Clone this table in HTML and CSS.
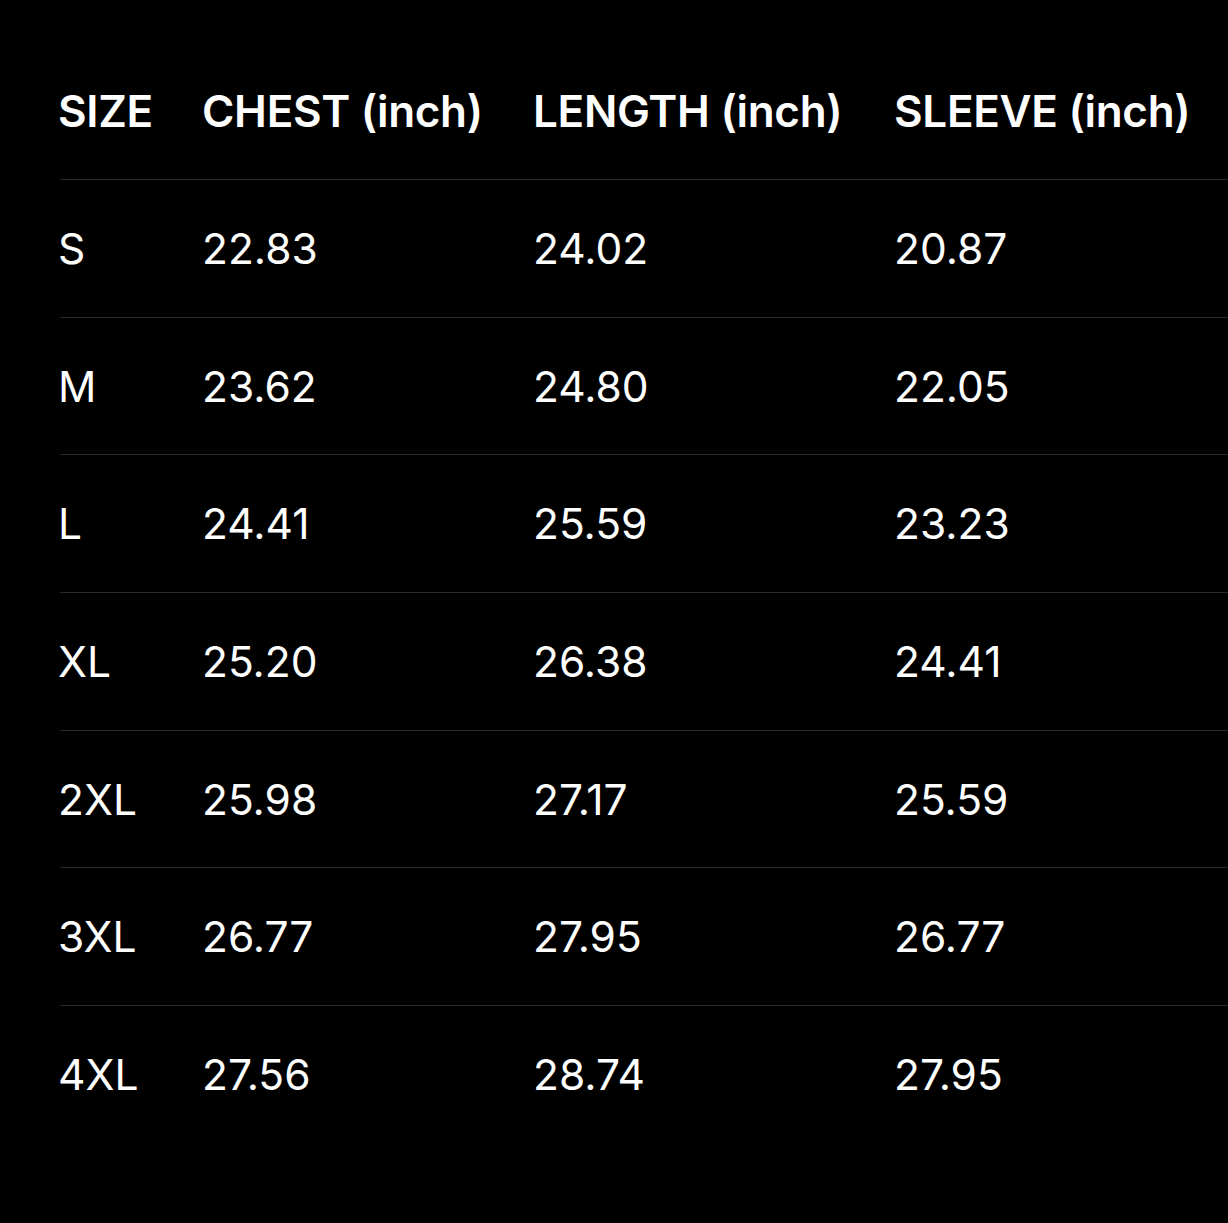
FILE: index.html
```html
<!DOCTYPE html>
<html lang="en">
<head>
<meta charset="utf-8">
<title>Size chart</title>
<link rel="stylesheet" href="styles.css">
</head>
<body>
<table class="size-table">
  <colgroup>
    <col class="col-size">
    <col class="col-chest">
    <col class="col-length">
    <col class="col-sleeve">
  </colgroup>
  <thead>
    <tr class="row head-row">
      <th>SIZE</th>
      <th>CHEST (inch)</th>
      <th>LENGTH (inch)</th>
      <th>SLEEVE (inch)</th>
    </tr>
  </thead>
  <tbody>
    <tr class="row"><td>S</td><td>22.83</td><td>24.02</td><td>20.87</td></tr>
    <tr class="row"><td>M</td><td>23.62</td><td>24.80</td><td>22.05</td></tr>
    <tr class="row"><td>L</td><td>24.41</td><td>25.59</td><td>23.23</td></tr>
    <tr class="row"><td>XL</td><td>25.20</td><td>26.38</td><td>24.41</td></tr>
    <tr class="row"><td>2XL</td><td>25.98</td><td>27.17</td><td>25.59</td></tr>
    <tr class="row"><td>3XL</td><td>26.77</td><td>27.95</td><td>26.77</td></tr>
    <tr class="row last-row"><td>4XL</td><td>27.56</td><td>28.74</td><td>27.95</td></tr>
  </tbody>
</table>
</body>
</html>
```
FILE: styles.css
```css
html, body {
  margin: 0;
  background: #000;
}
body {
  padding: 42px 0 0 60px;
  min-height: 1223px;
  box-sizing: border-box;
  font-family: Inter, "Liberation Sans", sans-serif;
  color: #fff;
  overflow: hidden;
}
.size-table {
  width: 1168px;
  border-collapse: collapse;
  table-layout: fixed;
}
.col-size { width: 144px; }
.col-chest { width: 331px; }
.col-length { width: 361px; }
.col-sleeve { width: auto; }
.row th,
.row td {
  height: 137.67px;
  box-sizing: border-box;
  padding: 0;
  text-indent: -2px;
  text-align: left;
  vertical-align: middle;
  border-bottom: 1px solid #2a2a2a;
  white-space: nowrap;
}
.row th {
  font-size: 44px;
  font-weight: 600;
  letter-spacing: -0.3px;
}
.row td {
  font-size: 42.5px;
  font-weight: 400;
  letter-spacing: 0;
}
.last-row td {
  border-bottom: none;
}
```
